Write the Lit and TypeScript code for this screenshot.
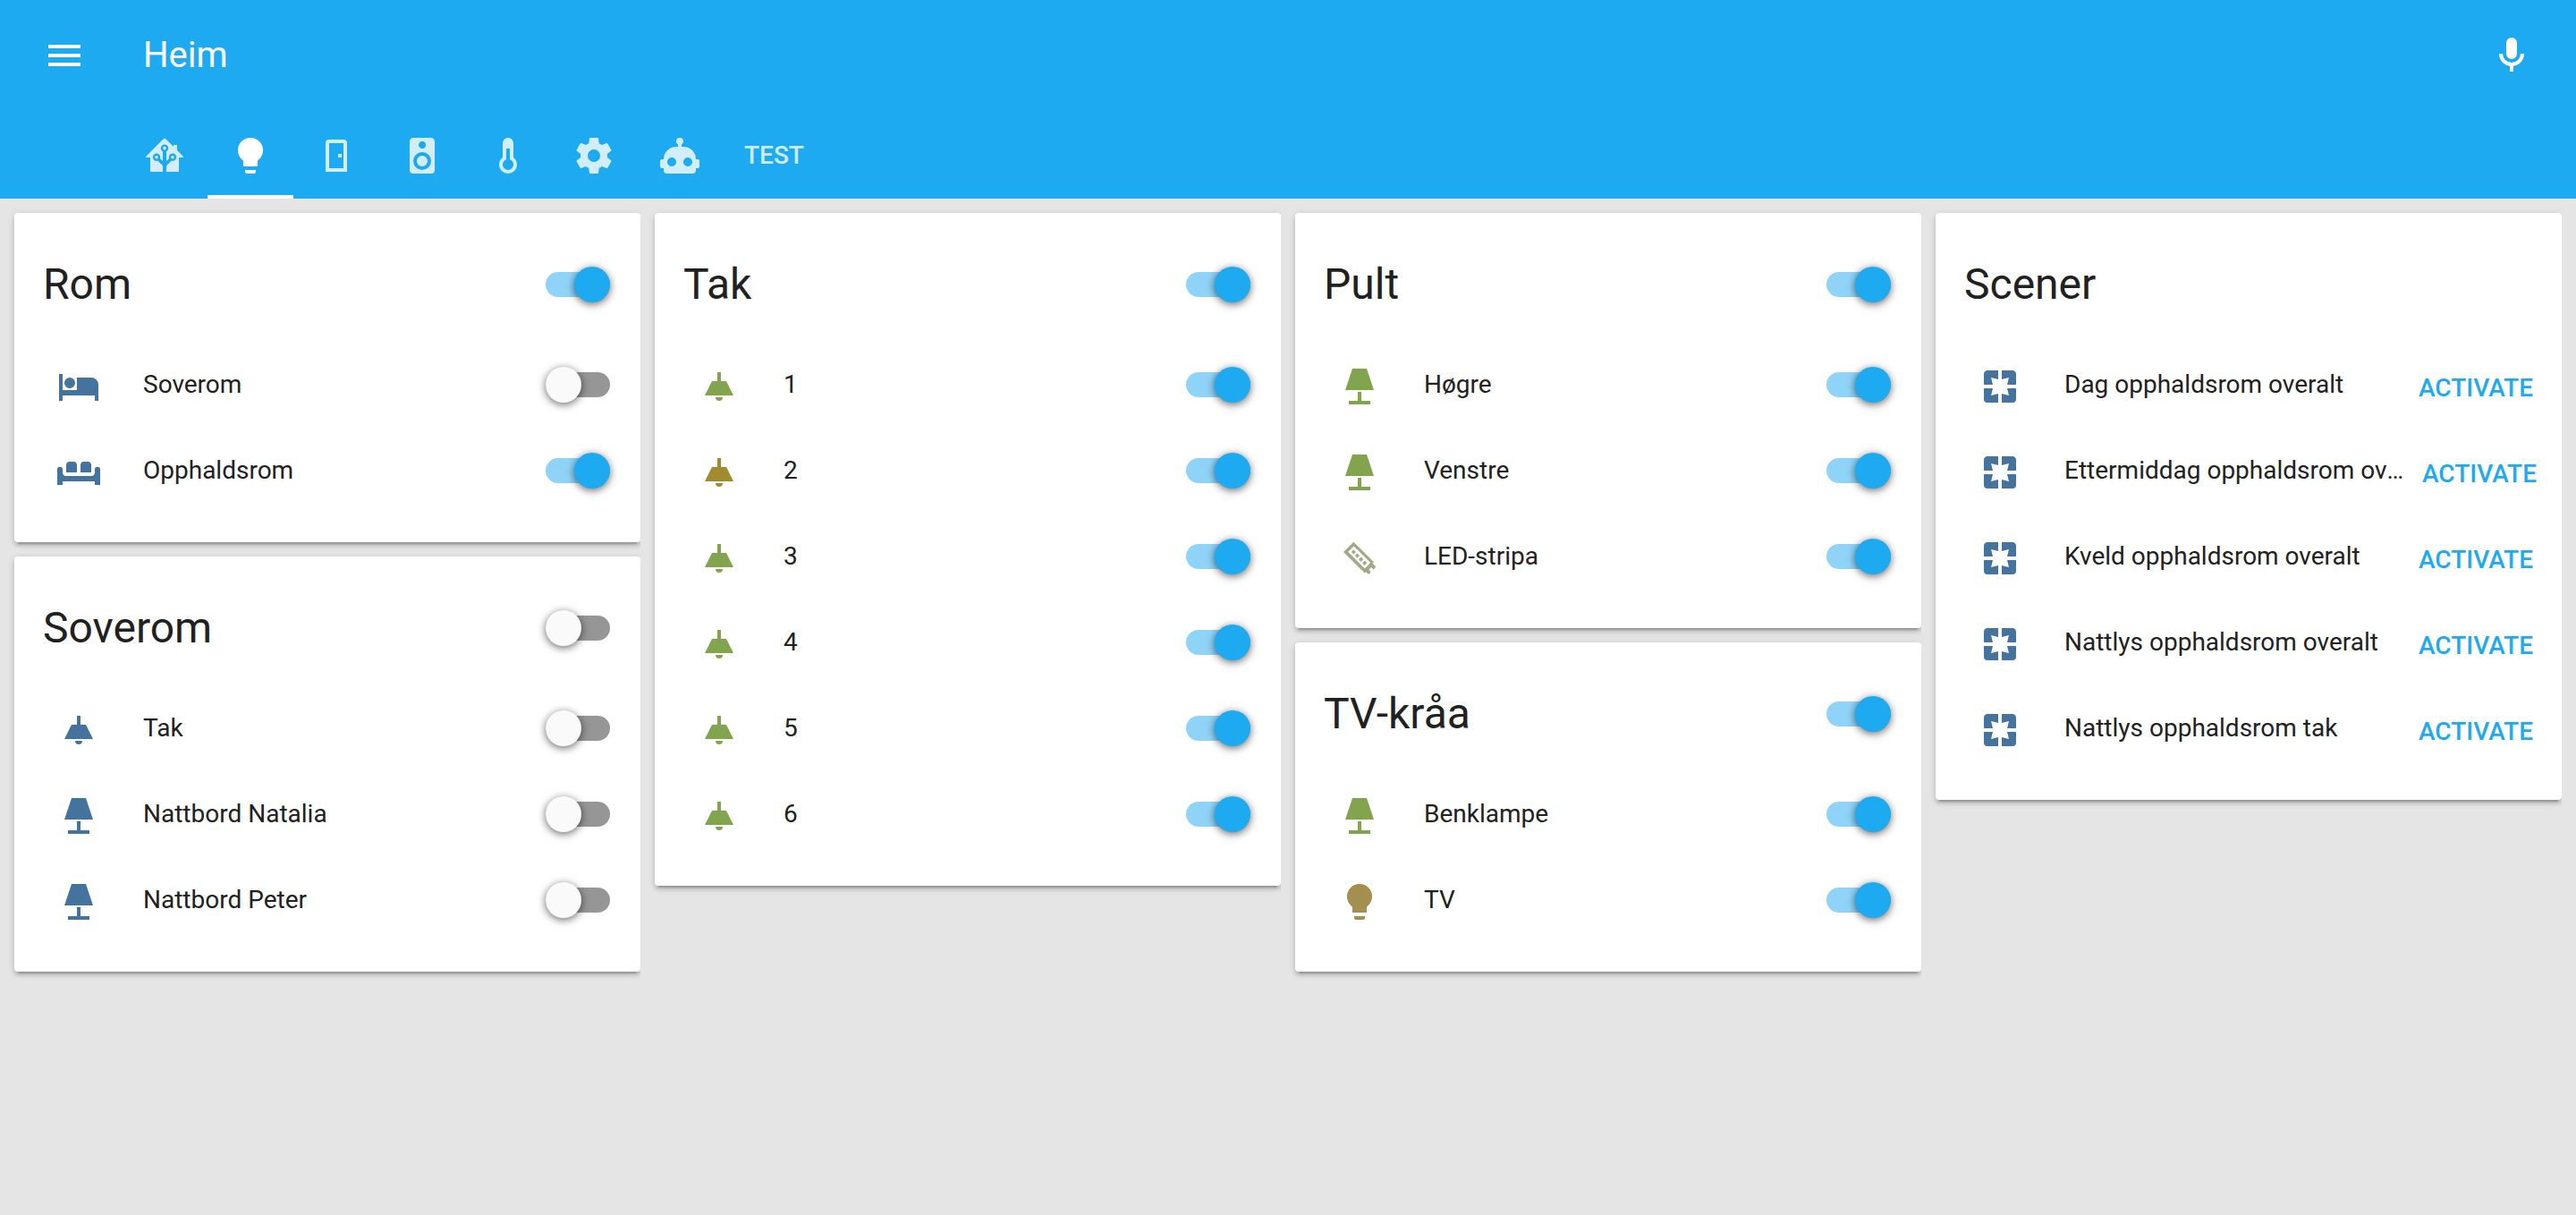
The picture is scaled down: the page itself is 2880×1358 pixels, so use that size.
import { LitElement, html, css, svg, nothing } from "lit";
import { customElement, property, state } from "lit/decorators.js";

const ICONS: Record<string, string> = {
  menu: "M3,6H21V8H3V6M3,11H21V13H3V11M3,16H21V18H3V16Z",
  microphone:
    "M12,2A3,3 0 0,1 15,5V11A3,3 0 0,1 12,14A3,3 0 0,1 9,11V5A3,3 0 0,1 12,2M19,11C19,14.53 16.39,17.44 13,17.93V21H11V17.93C7.61,17.44 5,14.53 5,11H7A5,5 0 0,0 12,16A5,5 0 0,0 17,11H19Z",
  home: "M21.8,13H20V21H13V17.67L15.79,14.88L16.5,15C17.66,15 18.6,14.06 18.6,12.9C18.6,11.74 17.66,10.8 16.5,10.8A2.1,2.1 0 0,0 14.4,12.9L14.5,13.61L13,15.13V9.65C13.66,9.29 14.1,8.6 14.1,7.8A2.1,2.1 0 0,0 12,5.7A2.1,2.1 0 0,0 9.9,7.8C9.9,8.6 10.34,9.29 11,9.65V15.13L9.5,13.61L9.6,12.9A2.1,2.1 0 0,0 7.5,10.8A2.1,2.1 0 0,0 5.4,12.9A2.1,2.1 0 0,0 7.5,15L8.21,14.88L11,17.67V21H4V13H2.25C1.83,13 1.42,13 1.42,12.79C1.43,12.57 1.85,12.15 2.28,11.72L11,3C11.33,2.67 11.67,2.33 12,2.33C12.33,2.33 12.67,2.67 13,3L17,7V6H19V9L21.78,11.78C22.18,12.18 22.59,12.59 22.6,12.8C22.6,13 22.2,13 21.8,13M7.5,12A0.9,0.9 0 0,1 8.4,12.9A0.9,0.9 0 0,1 7.5,13.8A0.9,0.9 0 0,1 6.6,12.9A0.9,0.9 0 0,1 7.5,12M16.5,12C17,12 17.4,12.4 17.4,12.9C17.4,13.4 17,13.8 16.5,13.8A0.9,0.9 0 0,1 15.6,12.9A0.9,0.9 0 0,1 16.5,12M12,6.9C12.5,6.9 12.9,7.3 12.9,7.8C12.9,8.3 12.5,8.7 12,8.7C11.5,8.7 11.1,8.3 11.1,7.8C11.1,7.3 11.5,6.9 12,6.9Z",
  bulb: "M12,2A7,7 0 0,0 5,9C5,11.38 6.19,13.47 8,14.74V18H16V14.74C17.81,13.47 19,11.38 19,9A7,7 0 0,0 12,2M9,20V21A1,1 0 0,0 10,22H14A1,1 0 0,0 15,21V20H9Z",
  door: "M16,3H8A2,2 0 0,0 6,5V21H18V5A2,2 0 0,0 16,3M16,19H8V5H16V19M15,11H13V13H15V11Z",
  speaker:
    "M12,12A3,3 0 0,0 9,15A3,3 0 0,0 12,18A3,3 0 0,0 15,15A3,3 0 0,0 12,12M12,20A5,5 0 0,1 7,15A5,5 0 0,1 12,10A5,5 0 0,1 17,15A5,5 0 0,1 12,20M12,4A2,2 0 0,1 14,6A2,2 0 0,1 12,8C10.89,8 10,7.1 10,6C10,4.89 10.89,4 12,4M17,2H7C5.89,2 5,2.89 5,4V20A2,2 0 0,0 7,22H17A2,2 0 0,0 19,20V4C19,2.89 18.1,2 17,2Z",
  thermometer:
    "M17,17A5,5 0 0,1 12,22A5,5 0 0,1 7,17C7,15.36 7.79,13.91 9,13V5A3,3 0 0,1 12,2A3,3 0 0,1 15,5V13C16.21,13.91 17,15.36 17,17M11,8V14.17C9.83,14.58 9,15.69 9,17A3,3 0 0,0 12,20A3,3 0 0,0 15,17C15,15.69 14.17,14.58 13,14.17V8H11Z",
  settings:
    "M12,15.5A3.5,3.5 0 0,1 8.5,12A3.5,3.5 0 0,1 12,8.5A3.5,3.5 0 0,1 15.5,12A3.5,3.5 0 0,1 12,15.5M19.43,12.97C19.47,12.65 19.5,12.33 19.5,12C19.5,11.67 19.47,11.34 19.43,11L21.54,9.37C21.73,9.22 21.78,8.95 21.66,8.73L19.66,5.27C19.54,5.05 19.27,4.96 19.05,5.05L16.56,6.05C16.04,5.66 15.5,5.32 14.87,5.07L14.5,2.42C14.46,2.18 14.25,2 14,2H10C9.75,2 9.54,2.18 9.5,2.42L9.13,5.07C8.5,5.32 7.96,5.66 7.44,6.05L4.95,5.05C4.73,4.96 4.46,5.05 4.34,5.27L2.34,8.73C2.21,8.95 2.27,9.22 2.46,9.37L4.57,11C4.53,11.34 4.5,11.67 4.5,12C4.5,12.33 4.53,12.65 4.57,12.97L2.46,14.63C2.27,14.78 2.21,15.05 2.34,15.27L4.34,18.73C4.46,18.95 4.73,19.03 4.95,18.95L7.44,17.94C7.96,18.34 8.5,18.68 9.13,18.93L9.5,21.58C9.54,21.82 9.75,22 10,22H14C14.25,22 14.46,21.82 14.5,21.58L14.87,18.93C15.5,18.67 16.04,18.34 16.56,17.94L19.05,18.95C19.27,19.03 19.54,18.95 19.66,18.73L21.66,15.27C21.78,15.05 21.73,14.78 21.54,14.63L19.43,12.97Z",
  robot:
    "M12,2A2,2 0 0,1 14,4C14,4.74 13.6,5.39 13,5.73V7H14A7,7 0 0,1 21,14H22A1,1 0 0,1 23,15V18A1,1 0 0,1 22,19H21V20A2,2 0 0,1 19,22H5A2,2 0 0,1 3,20V19H2A1,1 0 0,1 1,18V15A1,1 0 0,1 2,14H3A7,7 0 0,1 10,7H11V5.73C10.4,5.39 10,4.74 10,4A2,2 0 0,1 12,2M7.5,13A2.5,2.5 0 0,0 5,15.5A2.5,2.5 0 0,0 7.5,18A2.5,2.5 0 0,0 10,15.5A2.5,2.5 0 0,0 7.5,13M16.5,13A2.5,2.5 0 0,0 14,15.5A2.5,2.5 0 0,0 16.5,18A2.5,2.5 0 0,0 19,15.5A2.5,2.5 0 0,0 16.5,13Z",
  bed: "M19,7H11V14H3V5H1V20H3V17H21V20H23V11A4,4 0 0,0 19,7M7,13A3,3 0 0,0 10,10A3,3 0 0,0 7,7A3,3 0 0,0 4,10A3,3 0 0,0 7,13Z",
  sofa: "M7,6H9A2,2 0 0,1 11,8V12H5V8A2,2 0 0,1 7,6M15,6H17A2,2 0 0,1 19,8V12H13V8A2,2 0 0,1 15,6M1,9H2A1,1 0 0,1 3,10V12A2,2 0 0,0 5,14H19A2,2 0 0,0 21,12V10A1,1 0 0,1 22,9H23A1,1 0 0,1 24,10V19H21V17H3V19H0V10A1,1 0 0,1 1,9Z",
  ceiling:
    "M8,9H11V4H13V9H16L20,17H4L8,9M14,18A2,2 0 0,1 12,20A2,2 0 0,1 10,18H14Z",
  lamp: "M8,2H16L20,14H4L8,2M11,15H13V20H18V22H6V20H11V15Z",
  strip:
    "M8.66,2.83L19.98,14.15L19.27,14.85L19.98,15.56L20.5,16.1L21.2,16.8L19.8,18.2L18.6,17L17.2,18.4L18.4,19.6L17,21L15.6,19.6L14.85,20.3L3,8.5L8.66,2.83M8.8,5.2L5.6,8.4L14.9,17.7L18.1,14.5L8.8,5.2M8.67,7.2L9.97,8.5L8.67,9.8L7.37,8.5L8.67,7.2M10.7,9.25L12,10.55L10.7,11.85L9.4,10.55L10.7,9.25M12.75,11.3L14.05,12.6L12.75,13.9L11.45,12.6L12.75,11.3M14.8,13.35L16.1,14.65L14.8,15.95L13.5,14.65L14.8,13.35Z",
  scene:
    "M19,3H13V8L17,7L16,11H21V5C21,3.89 20.1,3 19,3M17,17L13,16V21H19A2,2 0 0,0 21,19V13H16M8,13H3V19A2,2 0 0,0 5,21H11V16L7,17M3,5V11H8L7,7L11,8V3H5C3.89,3 3,3.89 3,5Z",
};

const icon = (name: string) => svg`
  <svg class="icon" viewBox="0 0 24 24" aria-hidden="true"><path fill-rule="evenodd" d=${ICONS[name]}></path></svg>`;

type Tone = "off" | "green" | "ochre" | "sage" | "tan";

interface Row {
  name: string;
  icon: string;
  tone: Tone;
  on?: boolean;
}

interface Group {
  title: string;
  /** Groups without a master state list scenes, which are activated instead of toggled. */
  on?: boolean;
  rows: Row[];
}

const ceiling = (name: string, tone: Tone = "green"): Row => ({ name, icon: "ceiling", tone, on: true });
const scene = (name: string): Row => ({ name, icon: "scene", tone: "off" });

const COLUMNS: Group[][] = [
  [
    {
      title: "Rom",
      on: true,
      rows: [
        { name: "Soverom", icon: "bed", tone: "off", on: false },
        { name: "Opphaldsrom", icon: "sofa", tone: "off", on: true },
      ],
    },
    {
      title: "Soverom",
      on: false,
      rows: [
        { name: "Tak", icon: "ceiling", tone: "off", on: false },
        { name: "Nattbord Natalia", icon: "lamp", tone: "off", on: false },
        { name: "Nattbord Peter", icon: "lamp", tone: "off", on: false },
      ],
    },
  ],
  [
    {
      title: "Tak",
      on: true,
      rows: [ceiling("1"), ceiling("2", "ochre"), ceiling("3"), ceiling("4"), ceiling("5"), ceiling("6")],
    },
  ],
  [
    {
      title: "Pult",
      on: true,
      rows: [
        { name: "Høgre", icon: "lamp", tone: "green", on: true },
        { name: "Venstre", icon: "lamp", tone: "green", on: true },
        { name: "LED-stripa", icon: "strip", tone: "sage", on: true },
      ],
    },
    {
      title: "TV-kråa",
      on: true,
      rows: [
        { name: "Benklampe", icon: "lamp", tone: "green", on: true },
        { name: "TV", icon: "bulb", tone: "tan", on: true },
      ],
    },
  ],
  [
    {
      title: "Scener",
      rows: [
        scene("Dag opphaldsrom overalt"),
        scene("Ettermiddag opphaldsrom overalt"),
        scene("Kveld opphaldsrom overalt"),
        scene("Nattlys opphaldsrom overalt"),
        scene("Nattlys opphaldsrom tak"),
      ],
    },
  ],
];

const TABS = [
  { id: "home", icon: "home" },
  { id: "lights", icon: "bulb" },
  { id: "doors", icon: "door" },
  { id: "media", icon: "speaker" },
  { id: "climate", icon: "thermometer" },
  { id: "settings", icon: "settings" },
  { id: "automation", icon: "robot" },
  { id: "test", text: "TEST" },
];

const shared = css`
  * {
    box-sizing: border-box;
  }
  .icon {
    display: block;
    flex: none;
    width: 48px;
    height: 48px;
    fill: currentColor;
  }
  button {
    border: 0;
    background: none;
    font: inherit;
    color: inherit;
    cursor: pointer;
  }
`;

@customElement("entities-card")
export class EntitiesCard extends LitElement {
  @property({ attribute: false }) group!: Group;

  static styles = [
    shared,
    css`
      :host {
        display: block;
      }
      .card {
        padding: 40px 32px;
        border-radius: 4px;
        background: #fff;
        box-shadow:
          0 4px 4px rgba(0, 0, 0, 0.14),
          0 2px 10px rgba(0, 0, 0, 0.12),
          0 6px 2px -4px rgba(0, 0, 0, 0.2);
      }
      .head {
        display: flex;
        align-items: center;
        justify-content: space-between;
        margin-bottom: 32px;
      }
      .title {
        margin: 0;
        font-size: 48px;
        font-weight: 400;
        line-height: 80px;
      }
      .rows {
        display: grid;
        gap: 16px;
        margin: 0;
        padding: 0;
        list-style: none;
      }
      .row {
        display: flex;
        align-items: center;
        min-width: 0;
        height: 80px;
      }
      .badge {
        flex: none;
        margin: 4px 32px 0 0;
        padding: 0 16px;
      }
      .off {
        color: #44739e;
      }
      .green {
        color: #83a44f;
      }
      .ochre {
        color: #a28b2d;
      }
      .sage {
        color: #a2a984;
      }
      .tan {
        color: #a58f4e;
      }
      .name {
        flex: 1 1 auto;
        min-width: 0;
        overflow: hidden;
        text-overflow: ellipsis;
        white-space: nowrap;
        font-size: 28px;
        line-height: 40px;
      }
      .toggle {
        appearance: none;
        display: flex;
        align-items: center;
        flex: none;
        width: 72px;
        height: 28px;
        margin: 0 2px;
        border-radius: 14px;
        background: #969696;
        cursor: pointer;
      }
      .toggle::before {
        content: "";
        flex: none;
        width: 40px;
        height: 40px;
        border-radius: 50%;
        background: #fafafa;
        box-shadow: 0 2px 10px rgba(0, 0, 0, 0.6);
      }
      .toggle:checked {
        justify-content: flex-end;
        background: #8fd4f8;
      }
      .toggle:checked::before {
        background: #1eaaf1;
      }
      .activate {
        flex: 0 1 144px;
        margin: 8px -8px 0 16px;
        padding: 0 4px;
        color: #1eaaf1;
        font-size: 28px;
        font-weight: 500;
        line-height: 40px;
        text-align: center;
      }
    `,
  ];

  private toggle(id: string, label: string, on: boolean) {
    return html`<input class="toggle" type="checkbox" id=${id} aria-label=${label} .checked=${on} />`;
  }

  render() {
    const { title, on, rows } = this.group;
    const scenes = on === undefined;
    return html`
      <section class="card">
        <div class="head">
          <h2 class="title">${title}</h2>
          ${scenes ? nothing : this.toggle("all", title, on)}
        </div>
        <ul class="rows">
          ${rows.map(
            (row, i) => html`
              <li class="row">
                <span class="badge ${row.tone}">${icon(row.icon)}</span>
                ${scenes
                  ? html`<span class="name">${row.name}</span><button class="activate" type="button">ACTIVATE</button>`
                  : html`<label class="name" for="row-${i}">${row.name}</label>${this.toggle(`row-${i}`, row.name, !!row.on)}`}
              </li>
            `
          )}
        </ul>
      </section>
    `;
  }
}

@customElement("app-root")
export class AppRoot extends LitElement {
  @state() private tab = "lights";

  static styles = [
    shared,
    css`
      :host {
        display: block;
        min-height: 100vh;
        background: #e5e5e5;
        color: #212121;
        font-family: Roboto, "Noto Sans", sans-serif;
      }
      .header {
        background: #1eaaf1;
        color: #fff;
      }
      .toolbar {
        display: flex;
        align-items: center;
        height: 126px;
        padding: 0 32px 2px;
      }
      .tool {
        padding: 16px;
      }
      .heading {
        flex: 1;
        margin: 0 48px;
        font-size: 40px;
        font-weight: 400;
        line-height: 48px;
      }
      .tabs {
        display: flex;
        height: 96px;
        padding: 0 136px;
      }
      .tab {
        display: flex;
        align-items: center;
        padding: 4px 24px 0;
        border-bottom: 4px solid transparent;
        color: rgba(255, 255, 255, 0.8);
        font-size: 28px;
        font-weight: 500;
        line-height: 40px;
      }
      .tab[aria-selected="true"] {
        border-color: #fff;
        color: #fff;
      }
      .board {
        display: grid;
        grid-template-columns: repeat(4, minmax(0, 1fr));
        padding-right: 16px;
      }
      .column {
        display: flex;
        flex-direction: column;
        gap: 16px;
        padding: 16px 0 16px 16px;
        overflow: hidden;
      }
    `,
  ];

  render() {
    return html`
      <header class="header">
        <div class="toolbar">
          <button class="tool" type="button" aria-label="Menu">${icon("menu")}</button>
          <h1 class="heading">Heim</h1>
          <button class="tool" type="button" aria-label="Microphone">${icon("microphone")}</button>
        </div>
        <nav class="tabs" role="tablist">
          ${TABS.map(
            (t) => html`
              <button
                class="tab"
                type="button"
                role="tab"
                aria-label=${t.id}
                aria-selected=${t.id === this.tab ? "true" : "false"}
                @click=${() => (this.tab = t.id)}
              >
                ${t.icon ? icon(t.icon) : t.text}
              </button>
            `
          )}
        </nav>
      </header>
      <main class="board">
        ${COLUMNS.map(
          (groups) => html`
            <div class="column">${groups.map((g) => html`<entities-card .group=${g}></entities-card>`)}</div>
          `
        )}
      </main>
    `;
  }
}
